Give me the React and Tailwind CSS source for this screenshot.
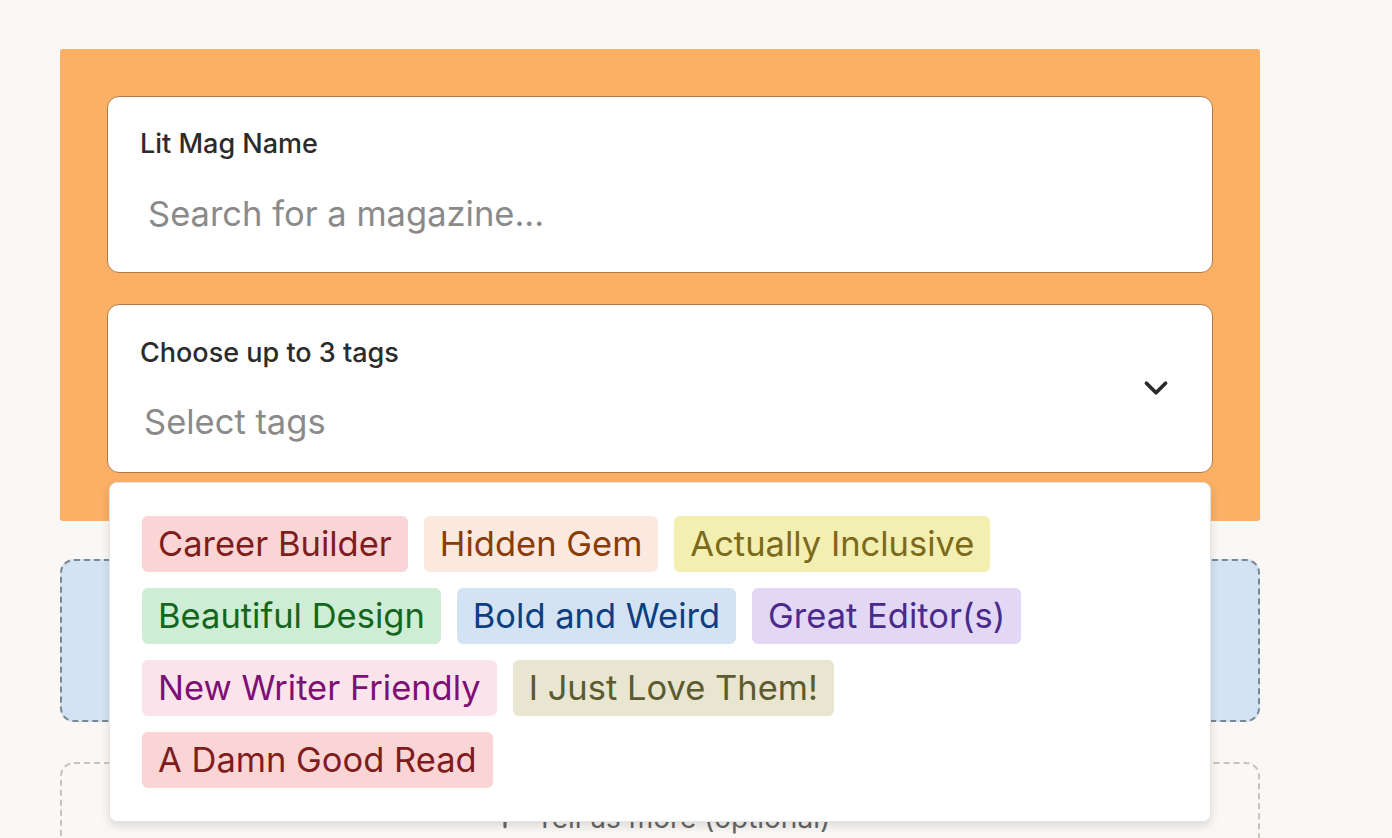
import React from "react";
import { ChevronDown, Plus } from "lucide-react";

const tags = [
  { label: "Career Builder", cls: "bg-[#fbd5d5] text-[#7f1d1d]" },
  { label: "Hidden Gem", cls: "bg-[#fbe9df] text-[#8a3c05]" },
  { label: "Actually Inclusive", cls: "bg-[#f3efb0] text-[#7c6a1c]" },
  { label: "Beautiful Design", cls: "bg-[#cdeed5] text-[#16651d]" },
  { label: "Bold and Weird", cls: "bg-[#d3e3f3] text-[#0d3f80]" },
  { label: "Great Editor(s)", cls: "bg-[#e2d8f5] text-[#4a2a8a]" },
  { label: "New Writer Friendly", cls: "bg-[#fbe3ec] text-[#7e0f74]" },
  { label: "I Just Love Them!", cls: "bg-[#e8e5d0] text-[#5c5a2e]" },
  { label: "A Damn Good Read", cls: "bg-[#fbd5d5] text-[#7f1d1d]" },
];

const App = () => {
  return (
    <div className="min-h-screen bg-[#faf7f4] font-['Inter',sans-serif] overflow-hidden">
      <div className="w-[1200px] ml-[60px] pt-[49px] flex flex-col">
        {/* Search form */}
        <div className="bg-[#fbb066] rounded-[3px] px-[47px] pt-[47px] pb-[48px] flex flex-col gap-[31px]">
          <div className="bg-white border border-[#b07a46] rounded-[12px] h-[177px] pl-[32px] pt-[33px]">
            <div className="text-[27px] leading-[28px] font-medium text-[#2b2b2b]">Lit Mag Name</div>
            <div className="mt-[36px] pl-[8px] text-[34.5px] leading-[40px] text-[#8a8a8a]">
              Search for a magazine...
            </div>
          </div>

          <div className="relative">
            <div className="bg-white border border-[#b07a46] rounded-[12px] h-[169px] pl-[32px] pr-[37px] flex items-center">
              <div className="flex-1 pt-[4px]">
                <div className="text-[27px] leading-[28px] font-medium text-[#2b2b2b]">Choose up to 3 tags</div>
                <div className="mt-[35px] pl-[4px] text-[34.5px] leading-[40px] text-[#8a8a8a]">Select tags</div>
              </div>
              <ChevronDown className="w-[38px] h-[38px] mb-[2px] text-[#2b2b2b]" strokeWidth={2.4} />
            </div>

            {/* Tags dropdown */}
            <div className="absolute z-10 top-[calc(100%+9px)] left-[2px] right-[2px] bg-white rounded-[8px] border border-[#e4e4e4] shadow-[0_4px_10px_rgba(0,0,0,0.12)] pt-[33px] pb-[33px] px-[32px] flex flex-wrap gap-[16px]">
              {tags.map((t) => (
                <span
                  key={t.label}
                  className={`h-[56px] px-[16px] rounded-[6px] flex items-center text-[34.5px] leading-none ${t.cls}`}
                >
                  {t.label}
                </span>
              ))}
            </div>
          </div>
        </div>

        {/* Upload area */}
        <div className="mt-[38px] h-[163px] bg-[#d3e3f3] border-2 border-dashed border-[#7b8894] rounded-[14px]" />

        {/* Notes area */}
        <div className="mt-[40px] h-[200px] border-2 border-dashed border-[#c9c2ba] rounded-[14px] pt-[36px] flex justify-center">
          <div className="flex items-center gap-[16px] h-[36px] text-[#666] text-[28px]">
            <Plus className="w-[30px] h-[30px]" strokeWidth={2.5} />
            <span>Tell us more (optional)</span>
          </div>
        </div>
      </div>
    </div>
  );
};

export default App;
